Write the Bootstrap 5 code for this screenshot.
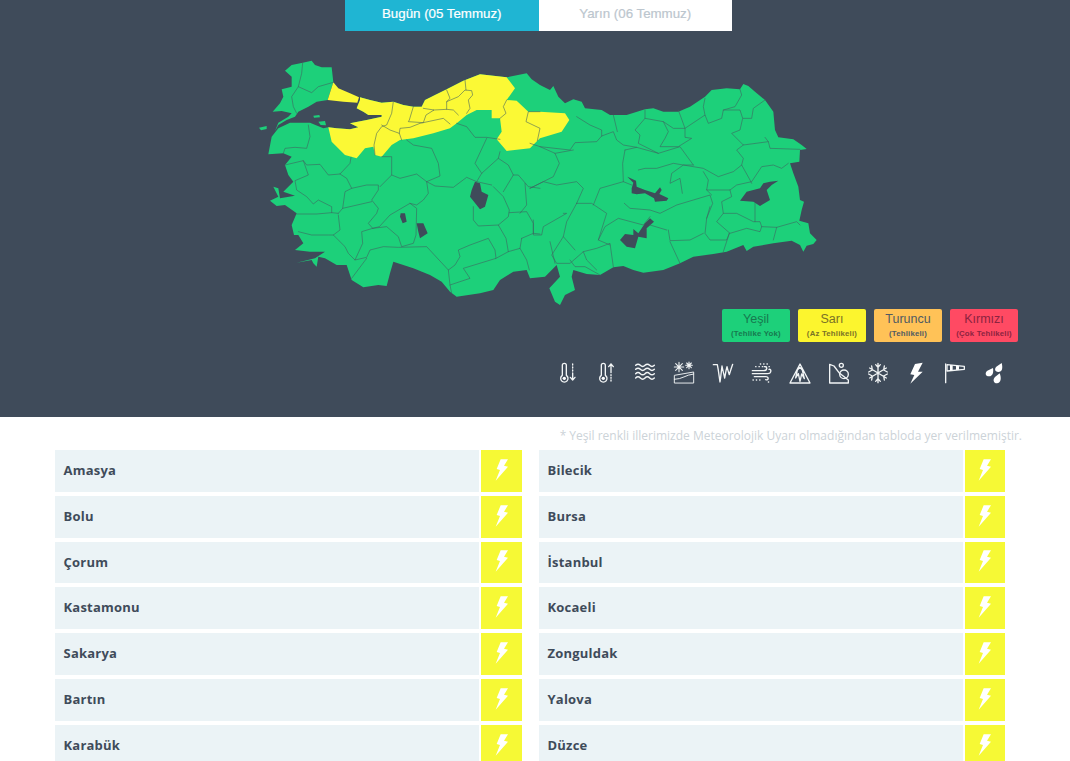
<!DOCTYPE html>
<html lang="tr">
<head>
  <meta charset="UTF-8" />
  <meta name="viewport" content="width=device-width, initial-scale=1" />
  <title>Meteorolojik Uyarılar</title>
  <link href="https://cdn.jsdelivr.net/npm/bootstrap@5.3.0/dist/css/bootstrap.min.css" rel="stylesheet" />
  <style>
    html, body { height: 761px; overflow: hidden; }
    body { background: #fff; font-family: "Open Sans", sans-serif; }
    .harita-alan { background: #3f4b5a; height: 417px; }
    .sekmeler { padding-left: 7px; margin-bottom: 19px; }
    .sekme { width: 193.5px; height: 31px; text-align: center; font: 400 13.3px/28px "Liberation Sans", sans-serif; -webkit-text-stroke: .2px; color: #bcc6ce; background: #fff; text-decoration: none; }
    .sekme.aktif { background: #1fb5d3; color: #fff; }
    .harita { display: block; width: 590px; height: 259px; }
    .il { fill: #1dd07a; }
    .sari-il { fill: #fbf935; }
    .gol { fill: #3f4b5a; }
    .sinir { fill: none; stroke: #3f5f60; stroke-width: 2; stroke-linejoin: round; stroke-linecap: round; stroke-opacity: .85; }
    .lejant { padding-right: 52px; gap: 8px; }
    .lejant-kutu { width: 68px; height: 33px; border-radius: 2px; text-align: center; font-family: "Liberation Sans", sans-serif; font-size: 12.5px; line-height: 14px; padding-top: 3px; }
    .lejant-kutu b { display: block; font-size: 7.8px; line-height: 9px; margin-top: 3px; letter-spacing: .2px; white-space: nowrap; }
    .l-yesil { background: #1dd07a; color: #17794f; }
    .l-sari { background: #fcf52e; color: #7a7226; }
    .l-turuncu { background: #ffc257; color: #505a62; }
    .l-kirmizi { background: #ff4a63; color: #8c2340; }
    .ikonlar { margin-top: 16px; padding-right: 57px; }
    .ikon { width: 38.7px; height: 30px; display: flex; justify-content: center; }
    .ikon svg { width: 30px; height: 30px; fill: none; stroke: #f2f5f6; stroke-width: 4; stroke-linecap: round; stroke-linejoin: round; }
    .ikon .dolu { fill: #fff; stroke: none; }
    .dipnot { font-size: 12px; line-height: 16px; color: #ccd3d8; text-align: right; padding: 11px 48px 6px 0; }
    .uyari-liste { display: grid; grid-template-columns: 467px 466px; column-gap: 17px; row-gap: 4px; padding-left: 55px; grid-auto-rows: 41.8px; }
    .uyari { display: flex; }
    .il-adi { flex-grow: 1; background: #ebf3f6; color: #3f4b5a; font-weight: 700; font-size: 13px; line-height: 41.8px; padding-left: 8.5px; letter-spacing: .22px; margin-right: 2px; }
    .bayrak { width: 41px; background: #f6f935; display: flex; align-items: center; justify-content: center; }
    .uyari:nth-child(even) .bayrak { width: 40px; }
    .bayrak svg { width: 14px; height: 22px; margin-top: -2px; fill: #fff; }
  </style>
</head>
<body>
  <!-- Harita bolumu -->
  <section class="harita-alan">
    <nav class="sekmeler d-flex justify-content-center">
      <a class="sekme aktif" href="#">Bugün (05 Temmuz)</a>
      <a class="sekme" href="#">Yarın (06 Temmuz)</a>
    </nav>

    <div class="d-flex justify-content-center">
      <svg class="harita" viewBox="-30 0 1770 777">
        <!-- kara parcalari -->
        <path class="il" d="M105,62 125,45 158,38 185,32 195,45 215,52 245,52 250,97 233,150 200,155 175,170 145,185 135,200 110,210 85,225 75,243 85,218 115,200 125,190 95,183 68,185 90,160 100,140 95,118 125,110 125,80Z" />
        <path class="il" d="M330,142 360,150 395,158 430,155 460,165 490,170 515,170 525,150 555,135 590,118 640,92 690,73 770,82 830,70 845,88 870,105 900,120 910,108 925,140 945,160 970,148 995,155 1005,175 1055,180 1080,195 1130,195 1185,178 1210,175 1240,185 1285,185 1320,170 1365,140 1385,120 1430,115 1470,118 1480,102 1495,108 1515,125 1545,150 1570,185 1575,240 1585,262 1630,268 1655,285 1670,297 1650,300 1648,335 1620,340 1630,370 1645,410 1650,450 1662,455 1655,480 1648,512 1675,520 1680,550 1700,570 1690,582 1670,587 1660,605 1650,585 1625,572 1570,580 1510,590 1490,603 1480,585 1430,605 1390,612 1330,620 1290,640 1240,660 1180,668 1150,660 1120,648 1090,652 1050,675 1010,672 970,660 965,680 975,720 945,735 930,765 915,755 898,715 930,680 920,645 885,680 840,685 830,660 790,665 750,690 730,720 690,730 620,740 600,725 575,695 540,675 490,655 430,635 420,670 410,708 385,705 340,712 305,690 290,645 260,645 225,625 205,620 200,650 190,640 185,630 140,638 195,625 225,605 180,605 135,600 160,580 145,555 132,555 125,525 140,490 105,465 80,468 60,452 85,440 70,410 85,415 90,445 135,437 100,425 130,395 115,375 105,345 125,320 100,310 55,313 65,260 85,235 120,218 180,218 220,235 235,232 260,235 300,238 325,232 300,220 350,210 395,200 395,195 355,195 340,185 320,175 330,150Z" />
        <path class="il" d="M190,197 208,195 210,202 192,203Z M205,215 225,213 228,226 212,225Z M27,233 50,228 50,237 33,241Z" />
        <!-- sari iller -->
        <path class="sari-il" d="M250,97 265,115 300,130 327,142 322,158 280,155 233,150Z" />
        <path class="sari-il" d="M330,142 360,150 395,158 430,155 460,165 490,170 515,170 525,150 555,135 590,118 640,92 690,73 770,82 795,115 770,150 800,152 835,185 870,185 945,190 958,210 935,245 870,265 862,272 840,295 770,303 740,268 755,245 750,205 725,205 725,180 680,180 650,195 620,220 600,235 550,250 490,265 450,270 425,285 395,320 375,315 370,290 345,295 320,325 285,315 245,275 235,232 260,235 300,238 325,232 300,220 350,210 395,200 395,195 355,195 340,185 320,175 330,150Z" />
        <!-- goller -->
        <path class="gol" d="M675,395 690,400 695,425 715,435 705,470 690,478 660,440 665,420Z M452,490 465,490 470,515 458,520 450,500Z M500,520 520,520 533,550 510,565 505,545Z" />
        <path class="gol" d="M1132,380 1158,392 1160,410 1185,420 1215,430 1230,412 1235,420 1228,432 1255,445 1250,452 1215,455 1212,445 1185,430 1160,433 1145,430 1145,415 1150,398Z" />
        <path class="gol" d="M1200,505 1212,515 1190,535 1190,565 1165,560 1155,595 1130,590 1110,570 1125,552 1150,555 1150,537 1165,550 1185,520Z" />
        <path class="gol" d="M1585,392 1560,395 1540,400 1530,415 1490,425 1470,452 1510,455 1530,468 1560,450 1550,420 1565,405Z" />
        <!-- il sinirlari: bati -->
        <path class="sinir" d="M158,38 155,70 145,110 125,140 130,170 140,190 M145,110 185,128 205,110 250,97" />
        <path class="sinir" d="M430,155 425,190 410,225 395,230 380,250 372,285 375,315 M395,225 420,240 448,250 455,270 M490,170 478,210 475,215 520,218 528,195 552,180 520,175 M448,250 450,235 480,232 510,220 580,205 600,222 M552,180 590,178 590,155 600,145 590,120 M590,155 625,140 645,120 665,122 668,135 655,150 660,175 650,190 M590,178 610,180 625,195 M645,90 648,120 M770,150 760,170 768,190 750,205 M870,185 835,185 828,215 870,235 862,272" />
        <path class="sinir" d="M175,225 180,260 170,295 135,292 105,295 100,310 M105,345 160,332 170,345 210,343 235,375 270,372 300,340 303,322 M160,332 175,375 135,392 140,420 170,440 190,462 205,450 245,470 245,488 265,490 M270,372 290,385 305,415 285,425 278,475 265,490 M305,415 350,405 385,405 385,420 365,450 385,475 380,490 355,520 368,535 M278,475 365,455" />
        <path class="sinir" d="M395,320 425,320 425,375 390,410 M425,375 450,385 500,372 530,395 570,378 565,340 545,295 490,285 470,270 M620,220 650,230 675,262 710,262 750,268 M530,395 535,430 520,450 500,465 480,460 420,495 388,530 368,535 335,545 338,580 315,630 295,610 285,590 250,555 270,540 265,495 M530,395 555,408 610,412 650,382 680,395 725,405" />
        <path class="sinir" d="M140,492 200,492 245,488 M145,545 185,555 235,555 250,555 M350,625 305,685 M315,630 350,622 360,600 400,590 445,592 530,590 595,660 600,705 605,730 M368,535 410,530 445,560 455,590 490,580 498,555 500,475 480,460" />
        <path class="sinir" d="M595,660 615,645 630,620 625,600 660,585 715,565 735,600 738,625 640,655 660,685 600,705 M738,625 775,605 810,595 830,630 838,660 M775,605 768,565 745,525 775,500 778,480 760,440 730,410 M670,470 670,510 685,528 745,525 M680,395 695,370 745,325 775,345 790,375 760,425 M695,370 675,340 710,265 M745,325 750,305 M790,375 805,375 835,410 870,415 M778,488 830,485 850,520 850,550 870,552 M815,565 850,550 M810,595 815,565 M825,400 830,465 810,490" />
        <!-- il sinirlari: dogu -->
        <path class="sinir" d="M840,415 880,395 910,380 928,340 915,310 870,290 840,280 M870,290 960,300 975,278 1040,275 1055,258 1090,245 1100,270 1120,285 1160,292 M980,200 1020,225 1055,240 1055,258 M1090,195 1102,245 M915,310 970,300 M1125,300 1160,292 1225,310 1290,290 1330,345 M1125,300 1118,340 1120,395" />
        <path class="sinir" d="M840,415 880,395 920,405 980,395 1000,415 980,460 M980,460 1025,460 1070,490 1045,570 1080,585 M980,460 950,515 940,560 905,615 920,640 960,640 1000,605 1040,595 1080,580 1090,650 M940,490 950,490 880,530 875,555 850,555 850,510 M1030,465 1050,415 1120,395 1145,405 M960,630 975,650 1005,650 1050,675 M1000,605 1010,630 1040,660" />
        <path class="sinir" d="M1045,570 1065,530 1105,505 1180,525 1200,500 M1123,460 1140,475 1200,480 1230,490 1280,465 1330,450 1380,435 1388,460 1370,505 1365,550 1380,570 1430,570 1438,550 M1297,430 1290,385 1260,400 1265,370 1300,345 1360,355 1405,380 1450,365 1475,345 1500,390 1505,400 M1165,360 1185,355 1220,355 1270,340 1300,345 1330,345" />
        <path class="sinir" d="M1360,365 1375,390 1370,420 1385,435 M1370,420 1440,420 1460,405 1505,395 1535,350 1570,345 1595,355 1615,340 M1440,420 1445,440 1415,455 1420,490 1460,490 1510,515 1530,515 1535,530 1530,545 1490,535 1440,550 1400,515 1420,490 M1380,470 1370,505 M1515,460 1515,515 M1535,530 1580,532 1640,515 1650,525 M1580,532 1570,570 M1438,550 1420,605 M1255,540 1260,572 1320,570 1360,550 M1260,575 1290,640 M1200,525 1250,540" />
        <path class="sinir" d="M1185,180 1185,205 1155,240 1170,255 1165,280 1225,310 M1185,205 1240,215 1270,235 1305,235 1285,180 M1240,215 1255,245 1245,265 1230,290 1285,290 1325,265 1305,262 1305,235 1365,195 1375,220 1415,205 1420,180 1470,180 1478,205 1470,240 1445,250 1480,285 1460,300 1480,325 1475,345" />
        <path class="sinir" d="M1365,195 1360,170 1365,145 M1420,180 1455,170 1475,135 1470,118 M1480,205 1505,205 1510,175 1545,150 M1480,285 1555,275 1560,295 1650,298 M1545,262 1555,275 M900,575 915,640 M940,560 975,600" />
      </svg>
    </div>

    <div class="lejant d-flex justify-content-end">
      <div class="lejant-kutu l-yesil">Yeşil<b>(Tehlike Yok)</b></div>
      <div class="lejant-kutu l-sari">Sarı<b>(Az Tehlikeli)</b></div>
      <div class="lejant-kutu l-turuncu">Turuncu<b>(Tehlikeli)</b></div>
      <div class="lejant-kutu l-kirmizi">Kırmızı<b>(Çok Tehlikeli)</b></div>
    </div>

    <div class="ikonlar d-flex justify-content-end">
      <div class="ikon"><svg viewBox="0 0 90 90"><path d="M28,52V22a6,6 0 0 1 12,0V52a11,11 0 1 1-12,0Z" /><circle class="dolu" cx="34" cy="61" r="5" /><path d="M59,18V21M59,27V30M59,36V39M59,45V66M52,58 59,66 66,58" /></svg></div>
      <div class="ikon"><svg viewBox="0 0 90 90"><path d="M28,52V22a6,6 0 0 1 12,0V52a11,11 0 1 1-12,0Z" /><circle class="dolu" cx="34" cy="61" r="5" /><path d="M57,18V44M50,26 57,18 64,26M57,50V53M57,58V61M57,66V69" /></svg></div>
      <div class="ikon"><svg viewBox="0 0 90 90"><path stroke-width="4.4" d="M17,22q7,-7 14,0t14,0 14,0 14,0M17,34q7,-7 14,0t14,0 14,0 14,0M17,47q7,-7 14,0t14,0 14,0 14,0M17,60q7,-7 14,0t14,0 14,0 14,0" /></svg></div>
      <div class="ikon"><svg viewBox="0 0 90 90"><path stroke-width="2.8" d="M16,74V52L74,42V74ZM16,64C40,64 50,50 74,48" /><path stroke-width="3.2" d="M30,13V41M16,27H44M20,17 40,37M40,17 20,37M60,12V32M50,22H70M53,15 67,29M67,15 53,29" /></svg></div>
      <div class="ikon"><svg viewBox="0 0 90 90"><path d="M16,20H28C32,40 34,60 36,72 38,60 40,40 42,24 44,36 48,50 50,60 52,50 54,36 57,26 59,36 62,44 64,50 67,40 70,30 74,19" /></svg></div>
      <div class="ikon"><svg viewBox="0 0 90 90"><path d="M16,38H50C62,38 62,24 52,26M16,47H62C74,47 74,32 66,34M22,56H56C66,56 66,68 56,65" /><path stroke-width="4" stroke-dasharray="1 9" d="M26,26H72M18,66H44M64,72H72M40,18H64" /></svg></div>
      <div class="ikon"><svg viewBox="0 0 90 90"><path d="M15,75 45,18 75,75ZM37,36 32,60 40,47 45,70 50,48 58,62 52,36 45,28Z" /></svg></div>
      <div class="ikon"><svg viewBox="0 0 90 90"><path d="M17,19V75H73V66L45,44 30,24Z" /><circle cx="52" cy="22" r="6" /><circle cx="60" cy="49" r="13" /></svg></div>
      <div class="ikon"><svg viewBox="0 0 90 90"><path d="M45,16V74M20,30 70,60M70,30 20,60M38,20 45,28 52,20M38,70 45,62 52,70M17,42 28,36 26,24M73,48 62,54 64,66M73,42 62,36 64,24M17,48 28,54 26,66" /></svg></div>
      <div class="ikon"><svg viewBox="0 0 90 90"><path class="dolu" d="M42,18 65,14 51,41 65,41 28,77 40,51 28,49Z" /></svg></div>
      <div class="ikon"><svg viewBox="0 0 90 90"><path d="M17,18V74" /><path d="M21,20 73,25V34L21,39Z" /><path class="dolu" d="M30,21 38,22V37L30,38ZM48,23 57,24V35L48,36Z" /></svg></div>
      <div class="ikon"><svg viewBox="0 0 90 90"><path class="dolu" d="M68,15C72,30 70,42 58,42 47,42 45,31 54,25ZM42,30C44,42 42,55 30,55 19,55 17,44 25,38ZM62,46C68,60 66,76 54,76 43,76 41,64 48,57Z" /></svg></div>
    </div>
  </section>

  <p class="dipnot mb-0">* Yeşil renkli illerimizde Meteorolojik Uyarı olmadığından tabloda yer verilmemiştir.</p>

  <svg class="d-none"><symbol id="simsek" viewBox="0 0 40 66"><path d="M16,1 38,1 26,20 38,23 1,65 14,33 4,30Z" /></symbol></svg>

  <!-- Uyari listesi -->
  <div class="uyari-liste">
    <div class="uyari"><div class="il-adi">Amasya</div><div class="bayrak"><svg><use href="#simsek" /></svg></div></div>
    <div class="uyari"><div class="il-adi">Bilecik</div><div class="bayrak"><svg><use href="#simsek" /></svg></div></div>
    <div class="uyari"><div class="il-adi">Bolu</div><div class="bayrak"><svg><use href="#simsek" /></svg></div></div>
    <div class="uyari"><div class="il-adi">Bursa</div><div class="bayrak"><svg><use href="#simsek" /></svg></div></div>
    <div class="uyari"><div class="il-adi">Çorum</div><div class="bayrak"><svg><use href="#simsek" /></svg></div></div>
    <div class="uyari"><div class="il-adi">İstanbul</div><div class="bayrak"><svg><use href="#simsek" /></svg></div></div>
    <div class="uyari"><div class="il-adi">Kastamonu</div><div class="bayrak"><svg><use href="#simsek" /></svg></div></div>
    <div class="uyari"><div class="il-adi">Kocaeli</div><div class="bayrak"><svg><use href="#simsek" /></svg></div></div>
    <div class="uyari"><div class="il-adi">Sakarya</div><div class="bayrak"><svg><use href="#simsek" /></svg></div></div>
    <div class="uyari"><div class="il-adi">Zonguldak</div><div class="bayrak"><svg><use href="#simsek" /></svg></div></div>
    <div class="uyari"><div class="il-adi">Bartın</div><div class="bayrak"><svg><use href="#simsek" /></svg></div></div>
    <div class="uyari"><div class="il-adi">Yalova</div><div class="bayrak"><svg><use href="#simsek" /></svg></div></div>
    <div class="uyari"><div class="il-adi">Karabük</div><div class="bayrak"><svg><use href="#simsek" /></svg></div></div>
    <div class="uyari"><div class="il-adi">Düzce</div><div class="bayrak"><svg><use href="#simsek" /></svg></div></div>
  </div>

  <script src="https://cdn.jsdelivr.net/npm/bootstrap@5.3.0/dist/js/bootstrap.bundle.min.js"></script>
</body>
</html>
